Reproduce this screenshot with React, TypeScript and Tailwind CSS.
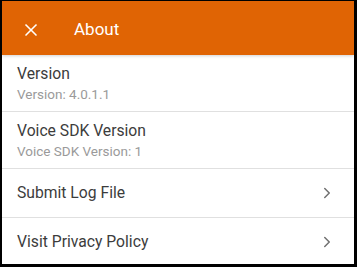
import { X, ChevronRight } from "lucide-react";

interface AboutRow {
  title: string;
  subtitle?: string;
  link?: boolean;
}

const rows: AboutRow[] = [
  { title: "Version", subtitle: "Version: 4.0.1.1" },
  { title: "Voice SDK Version", subtitle: "Voice SDK Version: 1" },
  { title: "Submit Log File", link: true },
  { title: "Visit Privacy Policy", link: true },
];

export default function App() {
  return (
    <div className="h-[267px] w-[357px] overflow-hidden bg-black pb-[3px] pl-[2px] pr-[3px] pt-px font-['Roboto',sans-serif]">
      <div className="flex h-full flex-col overflow-hidden bg-white">
        <header className="relative z-10 flex h-[54px] shrink-0 items-center bg-[#e06404] pt-[3px] shadow-[0_1px_3px_rgba(0,0,0,0.18)]">
          <X className="ml-[19px] h-[20px] w-[20px] text-white" strokeWidth={2} />
          <h1 className="ml-[33px] text-[17px] text-white">About</h1>
        </header>

        <div className="flex flex-col">
          {rows.map((row) => (
            <div
              key={row.title}
              className={`flex items-center justify-between border-b border-[#e0e0e0] pl-[15px] pr-[18px] ${
                row.subtitle ? "h-[57px] pt-px" : "h-[49px]"
              }`}
            >
              <div className="flex flex-col">
                <span className="text-[15.7px] leading-[20px] text-[#3c3c3c]">{row.title}</span>
                {row.subtitle ? (
                  <span className="mt-[1px] text-[13.5px] leading-[18px] text-[#9a9a9a]">{row.subtitle}</span>
                ) : null}
              </div>
              {row.link ? (
                <ChevronRight className="h-[18px] w-[18px] text-[#707070]" strokeWidth={2} />
              ) : null}
            </div>
          ))}
        </div>
      </div>
    </div>
  );
}
